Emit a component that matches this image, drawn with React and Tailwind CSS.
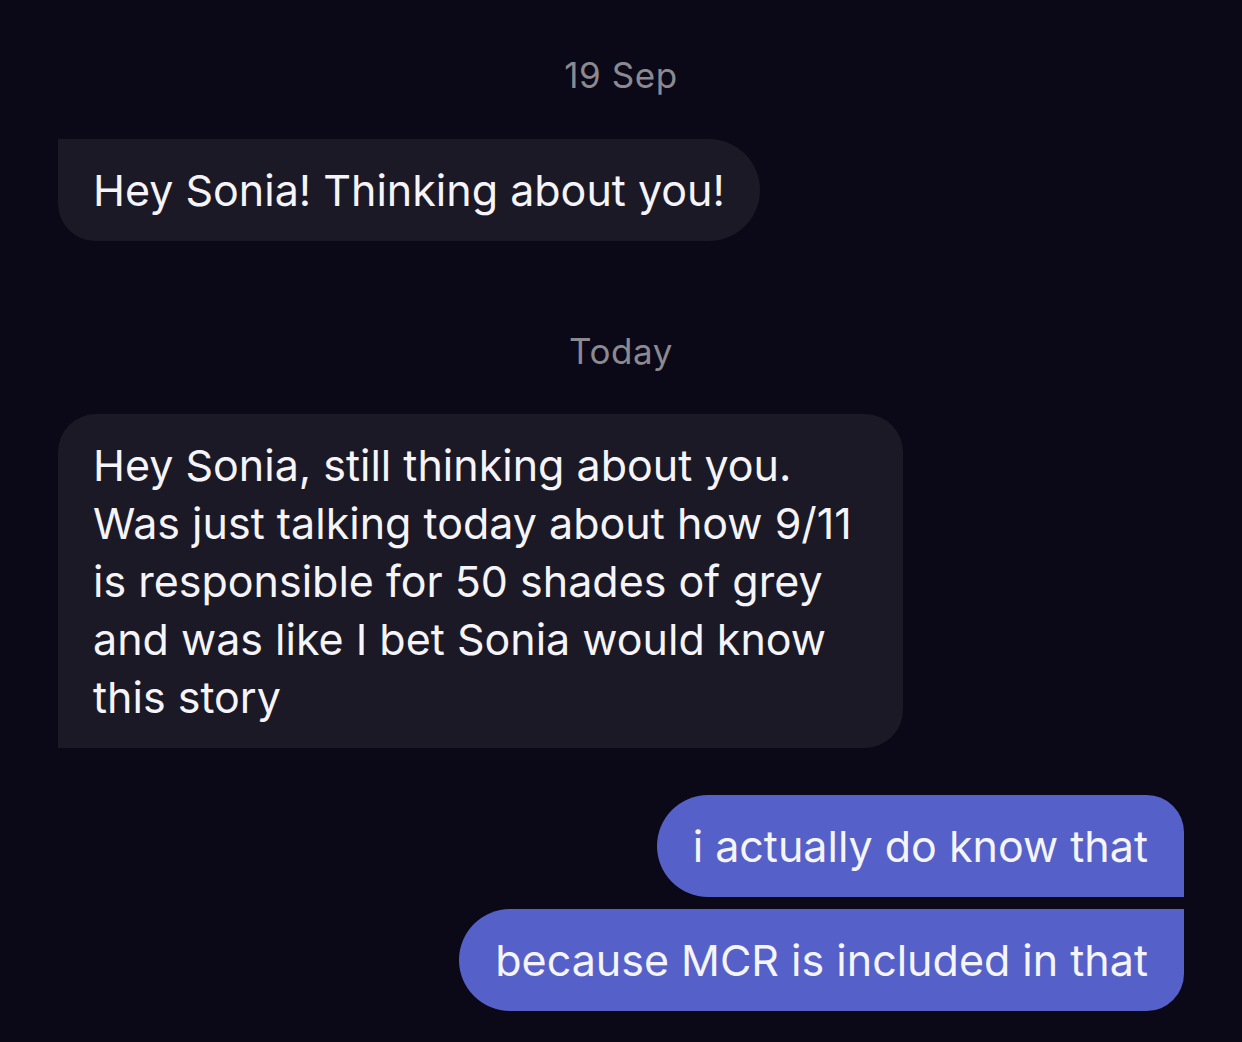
import React from 'react';

const received = [
  {
    date: '19 Sep',
    lines: ['Hey Sonia! Thinking about you!'],
    shape: 'rounded-tl-none rounded-bl-[38px] rounded-r-[52px]',
  },
  {
    date: 'Today',
    lines: [
      'Hey Sonia, still thinking about you.',
      'Was just talking today about how 9/11',
      'is responsible for 50 shades of grey',
      'and was like I bet Sonia would know',
      'this story',
    ],
    shape: 'w-[845px] rounded-tl-[38px] rounded-bl-none rounded-r-[38px]',
  },
];

const DateLabel = ({ children }) => (
  <div className="h-[40px] flex items-center justify-center text-[35px] tracking-[0.6px] leading-[40px] text-[#8b8a90]">
    {children}
  </div>
);

const App = () => {
  return (
    <div
      className="min-h-[1042px] bg-[#0b0817] px-[58px] pt-[55px] text-[#f5f4f8] antialiased"
      style={{ fontFamily: 'Inter, "Noto Sans", sans-serif' }}
    >
      {/* incoming messages, grouped under their day */}
      <DateLabel>{received[0].date}</DateLabel>
      <div className="mt-[44px] flex">
        <div className={`bg-[#1c1927] px-[35px] py-[22px] text-[43px] leading-[58px] ${received[0].shape}`}>
          {received[0].lines.join(' ')}
        </div>
      </div>

      <div className="mt-[90px]">
        <DateLabel>{received[1].date}</DateLabel>
      </div>
      <div className="mt-[43px] flex">
        <div className={`bg-[#1c1927] px-[35px] py-[22px] text-[43px] leading-[58px] ${received[1].shape}`}>
          {received[1].lines.map((line, i) => (
            <div key={i} className="whitespace-nowrap">{line}</div>
          ))}
        </div>
      </div>

      {/* my replies */}
      <div className="mt-[47px] flex flex-col items-end gap-[12px]">
        <div className="bg-[#5561c9] px-[36px] py-[22px] text-[43px] leading-[58px] rounded-l-[52px] rounded-tr-[38px] rounded-br-none">
          i actually do know that
        </div>
        <div className="bg-[#5561c9] px-[36px] py-[22px] text-[43px] leading-[58px] rounded-l-[52px] rounded-tr-none rounded-br-[38px]">
          because MCR is included in that
        </div>
      </div>
    </div>
  );
};

export default App;
